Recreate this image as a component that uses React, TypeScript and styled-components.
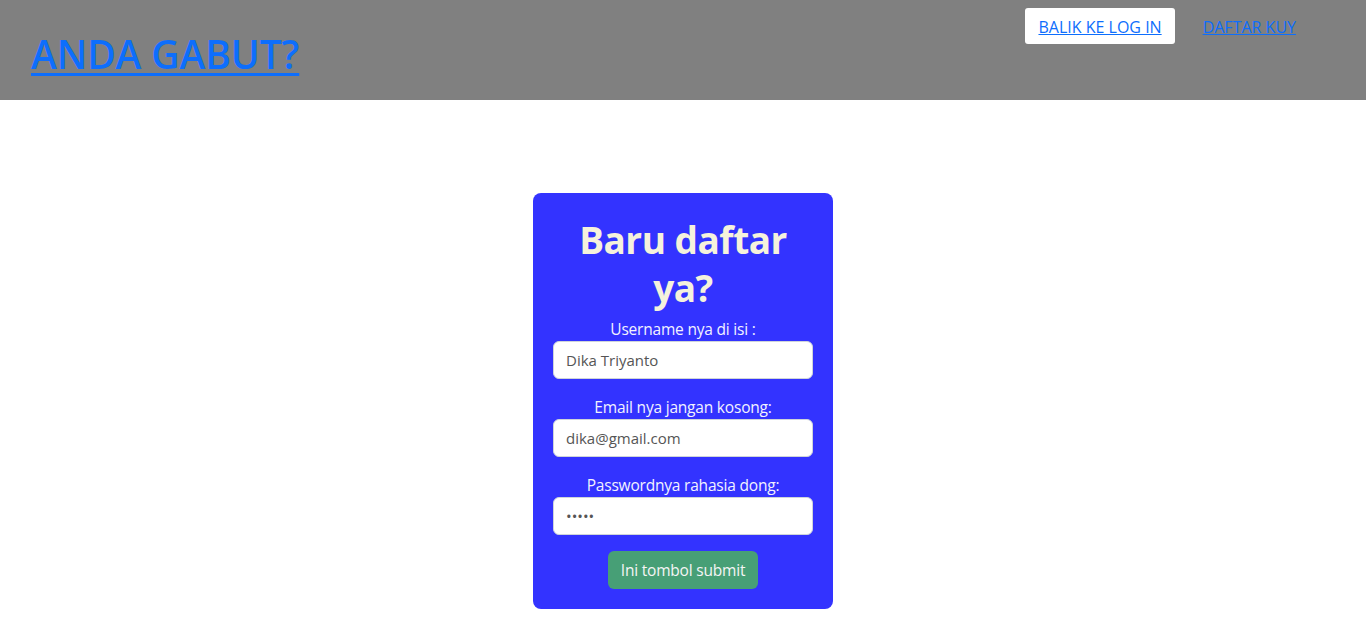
import React from "react";
import styled, { createGlobalStyle } from "styled-components";

const Global = createGlobalStyle`
  html, body { margin: 0; padding: 0; background: #ffffff; }
  body { font-family: "Open Sans", "Noto Sans", sans-serif; font-size: 16px; color: #212529; }
  * { box-sizing: border-box; }
`;

const Header = styled.header`
  height: 100px;
  background: #808080;
  display: flex;
  justify-content: space-between;
  align-items: flex-start;
  padding: 0 57px 0 31px;
`;

const Brand = styled.a`
  margin-top: 30px;
  font-size: 39px;
  line-height: 48px;
  font-weight: 600;
  color: #0d6efd;
  text-decoration: underline;
  text-decoration-thickness: 3px;
  text-underline-offset: 4px;
  letter-spacing: -0.1px;
`;

const Nav = styled.nav`
  display: flex;
  align-items: center;
  gap: 15px;
  margin-top: 8px;
`;

const NavLink = styled.a<{ $active?: boolean }>`
  display: inline-flex;
  align-items: center;
  height: 36px;
  padding: 1px 13px 0;
  border-radius: 3px;
  background: ${(p) => (p.$active ? "#ffffff" : "transparent")};
  color: #0d6efd;
  text-decoration: underline;
  font-size: 16px;
  letter-spacing: 0;
`;

const Main = styled.main`
  display: flex;
  justify-content: center;
  padding-top: 93px;
`;

const Card = styled.form`
  width: 300px;
  background: #3333ff;
  border-radius: 8px;
  padding: 23px 20px 20px;
  display: flex;
  flex-direction: column;
  align-items: center;
`;

const Title = styled.h1`
  margin: 0;
  font-size: 37px;
  line-height: 48px;
  font-weight: 700;
  color: #f5f2dc;
  text-align: center;
  width: 230px;
  letter-spacing: -0.5px;
`;

const Field = styled.div<{ $first?: boolean }>`
  width: 100%;
  display: flex;
  flex-direction: column;
  align-items: center;
  margin-top: ${(p) => (p.$first ? "6px" : "17px")};
`;

const Label = styled.label`
  font-size: 15.5px;
  line-height: 23px;
  color: #f2f2ff;
  text-align: center;
  letter-spacing: -0.2px;
`;

const Input = styled.input`
  width: 100%;
  height: 38px;
  border: 1px solid #ced4da;
  border-radius: 6px;
  padding: 0 12px;
  font-family: "Open Sans", "Noto Sans", sans-serif;
  font-size: 15px;
  color: #555;
  background: #fff;
  outline: none;
`;

const Submit = styled.button`
  margin-top: 16px;
  height: 38px;
  padding: 0 13px;
  border: none;
  border-radius: 6px;
  background: #479f76;
  color: #f5f5f5;
  font-family: "Open Sans", "Noto Sans", sans-serif;
  font-size: 15.5px;
  letter-spacing: -0.2px;
`;

export default function App() {
  return (
    <>
      <Global />
      <Header>
        <Brand href="#">ANDA GABUT?</Brand>
        <Nav>
          <NavLink href="#" $active>BALIK KE LOG IN</NavLink>
          <NavLink href="#">DAFTAR KUY</NavLink>
        </Nav>
      </Header>
      <Main>
        <Card onSubmit={(e) => e.preventDefault()}>
          <Title>Baru daftar ya?</Title>
          <Field $first>
            <Label>Username nya di isi :</Label>
            <Input type="text" defaultValue="Dika Triyanto" />
          </Field>
          <Field>
            <Label>Email nya jangan kosong:</Label>
            <Input type="email" defaultValue="dika@gmail.com" />
          </Field>
          <Field>
            <Label>Passwordnya rahasia dong:</Label>
            <Input type="password" defaultValue="12345" />
          </Field>
          <Submit type="submit">Ini tombol submit</Submit>
        </Card>
      </Main>
    </>
  );
}
